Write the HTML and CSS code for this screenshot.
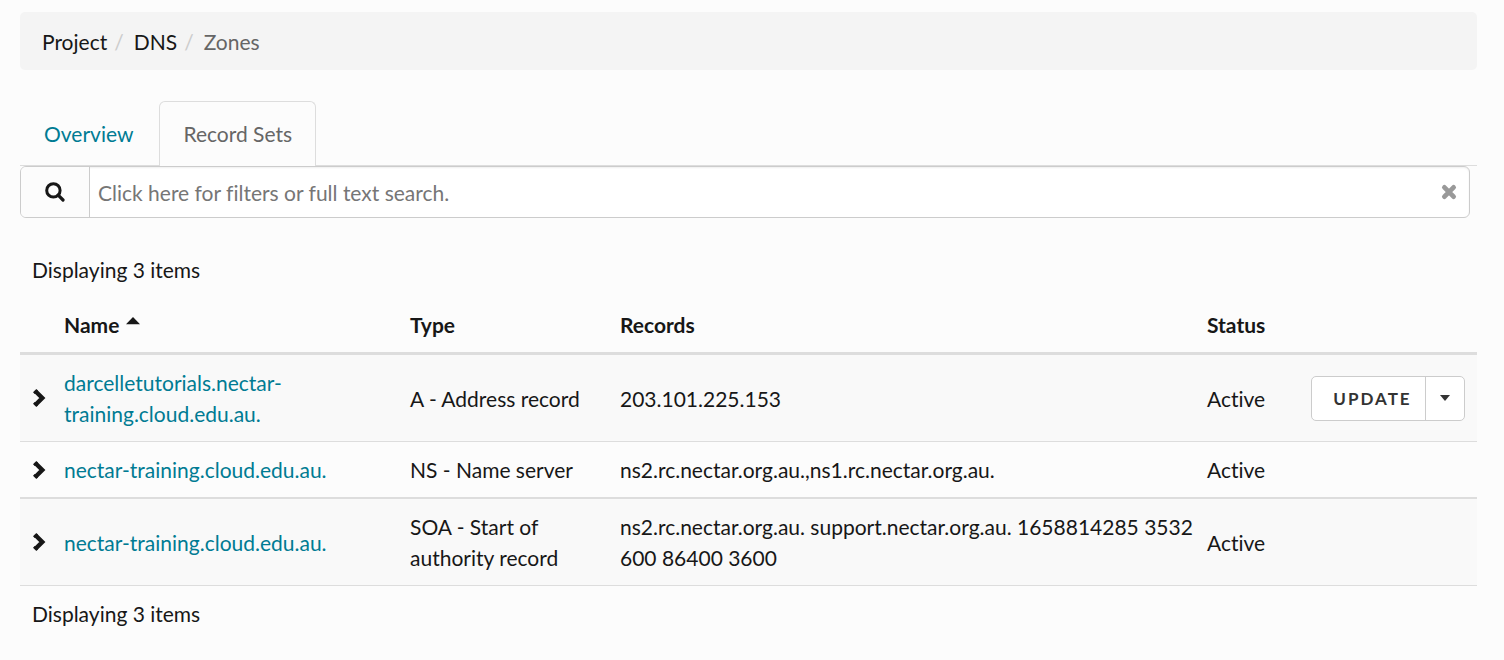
FILE: index.html
```html
<!DOCTYPE html>
<html lang="en">
<head>
<meta charset="utf-8">
<meta name="viewport" content="width=device-width, initial-scale=1">
<title>Zones - Record Sets</title>
<link rel="stylesheet" href="styles.css">
</head>
<body>
<svg class="sprite" aria-hidden="true">
  <symbol id="chevron" viewBox="0 0 14 20"><path d="M3.5 3.2 10.3 10 3.5 16.8" fill="none" stroke="currentColor" stroke-width="4.4" stroke-linecap="butt" stroke-linejoin="miter"/><path d="M1 4.3 4.3 1 6 2.7 2.7 6ZM1 15.7 4.3 19 6 17.3 2.7 14Z" fill="currentColor"/></symbol>
</svg>
<main class="page">
  <nav aria-label="Breadcrumb">
    <ol class="breadcrumb">
      <li><a href="#project">Project</a></li>
      <li><a href="#dns">DNS</a></li>
      <li class="current" aria-current="page">Zones</li>
    </ol>
  </nav>

  <nav class="tabs" aria-label="Zone details">
    <a class="tab" href="#overview">Overview</a>
    <a class="tab active" href="#record-sets" aria-current="page">Record Sets</a>
  </nav>

  <form class="search" role="search">
    <button class="search-button" type="button" aria-label="Search">
      <svg width="20" height="20" viewBox="0 0 20 20" aria-hidden="true"><circle cx="8.4" cy="8.4" r="6.7" fill="none" stroke="currentColor" stroke-width="3"/><path d="M13.2 13.2 18 18" stroke="currentColor" stroke-width="3.2" stroke-linecap="round"/></svg>
    </button>
    <input class="search-input" type="text" aria-label="Filter record sets" placeholder="Click here for filters or full text search.">
    <button class="clear-button" type="button" aria-label="Clear search">
      <svg width="16" height="16" viewBox="0 0 16 16" aria-hidden="true"><path d="M3.4 3.4 12.6 12.6M12.6 3.4 3.4 12.6" stroke="currentColor" stroke-width="4.8" stroke-linecap="round"/></svg>
    </button>
  </form>

  <p class="count">Displaying 3 items</p>
  <table class="records">
    <colgroup>
      <col class="col-toggle"><col class="col-name"><col class="col-type"><col><col class="col-status"><col class="col-actions">
    </colgroup>
    <thead>
      <tr>
        <td></td>
        <th scope="col" aria-sort="ascending">Name <svg class="sort" width="14" height="8" viewBox="0 0 14 8" aria-hidden="true"><path d="M7 0 14 7.2H0Z" fill="currentColor"/></svg></th>
        <th scope="col">Type</th>
        <th scope="col">Records</th>
        <th scope="col">Status</th>
        <td></td>
      </tr>
    </thead>
    <tbody>
      <tr class="striped">
        <td><button class="toggle" type="button" aria-label="Show details"><svg width="14" height="20"><use href="#chevron"/></svg></button></td>
        <td><a href="#record-1">darcelletutorials.nectar-training.cloud.edu.au.</a></td>
        <td>A - Address record</td>
        <td class="data">203.101.225.153</td>
        <td>Active</td>
        <td class="actions">
          <div class="split-button">
            <button class="update" type="button">UPDATE</button>
            <button class="more" type="button" aria-label="More actions"><svg width="12" height="6" viewBox="0 0 12 6" aria-hidden="true"><path d="M1 0H11L6 6Z" fill="currentColor"/></svg></button>
          </div>
        </td>
      </tr>
      <tr>
        <td><button class="toggle" type="button" aria-label="Show details"><svg width="14" height="20"><use href="#chevron"/></svg></button></td>
        <td><a href="#record-2">nectar-training.cloud.edu.au.</a></td>
        <td>NS - Name server</td>
        <td class="data">ns2.rc.nectar.org.au.,ns1.rc.nectar.org.au.</td>
        <td>Active</td>
        <td></td>
      </tr>
      <tr class="striped divided">
        <td><button class="toggle" type="button" aria-label="Show details"><svg width="14" height="20"><use href="#chevron"/></svg></button></td>
        <td><a href="#record-3">nectar-training.cloud.edu.au.</a></td>
        <td>SOA - Start of authority record</td>
        <td class="data">ns2.rc.nectar.org.au. support.nectar.org.au. 1658814285 3532 600 86400 3600</td>
        <td>Active</td>
        <td></td>
      </tr>
    </tbody>
  </table>
  <p class="count">Displaying 3 items</p>
</main>
</body>
</html>
```
FILE: styles.css
```css
* {
  box-sizing: border-box;
}

body {
  margin: 0;
  background: #fcfcfc;
  color: #171717;
  font: 21px/31px Lato, "Open Sans", sans-serif;
  font-variant-ligatures: none;
}

a {
  color: #007b93;
  text-decoration: none;
}

button,
input {
  margin: 0;
  font: inherit;
  color: inherit;
}

button {
  display: flex;
  align-items: center;
  justify-content: center;
  padding: 0;
  border: 0;
  background: none;
  cursor: pointer;
}

svg {
  flex: none;
}

.sprite {
  position: absolute;
  width: 0;
  height: 0;
}

.page {
  padding: 12px 27px 16px 20px;
}

.breadcrumb {
  display: flex;
  margin: 0 0 31px;
  padding: 14px 22px 13px;
  border-radius: 5px;
  background: #f4f4f4;
  list-style: none;
}

.breadcrumb a {
  color: #171717;
}

.breadcrumb li + li::before {
  content: "/";
  padding: 0 10px 0 7px;
  color: #ccc;
}

.breadcrumb .current {
  color: #666;
}

.tabs {
  display: flex;
  gap: 2px;
  border-bottom: 1px solid #ddd;
}

.tab {
  margin-bottom: -1px;
  padding: 16px 23px 17px;
  border: 1px solid transparent;
  border-bottom: 0;
  border-radius: 6px 6px 0 0;
}

.tab.active {
  border-color: #ddd;
  background: #fcfcfc;
  color: #666;
}

.search {
  display: flex;
  height: 52px;
  margin: 0 7px 24px 0;
  border: 1px solid #ccc;
  border-radius: 6px;
  background: #fff;
  box-shadow: inset 0 1px 2px #0001;
}

.search-button {
  width: 69px;
  border-right: 1px solid #ccc;
  border-radius: 5px 0 0 5px;
  background: #fcfcfc;
}

.search-input {
  flex: 1;
  min-width: 0;
  padding: 0 8px;
  border: 0;
  background: none;
}

.search-input::placeholder {
  color: #767676;
  opacity: 1;
}

.clear-button {
  width: 40px;
  color: #999;
}

.count {
  margin: 0;
  padding: 12px;
}

.records {
  width: 100%;
  border-collapse: separate;
  border-spacing: 0;
  table-layout: fixed;
}

.col-toggle {
  width: 32px;
}

.col-name {
  width: 346px;
}

.col-type {
  width: 210px;
}

.col-status {
  width: 104px;
}

.col-actions {
  width: 178px;
}

.records th,
.records td {
  padding: 12px;
  border-bottom: 1px solid #ddd;
  text-align: left;
  vertical-align: middle;
}

.records td:first-child,
.records .data {
  padding-right: 0;
}

.records thead th,
.records thead td {
  border-bottom-width: 3px;
}

.records .striped td {
  background: #f9f9f9;
}

.records .divided td {
  border-top: 1px solid #ddd;
}

.sort {
  margin-left: 2px;
  vertical-align: 8px;
}

.toggle svg {
  display: block;
}

.records .actions {
  padding-top: 0;
  padding-bottom: 0;
}

.split-button {
  display: flex;
  height: 45px;
  border: 1px solid #ccc;
  border-radius: 5px;
  background: #fff;
  color: #333;
}

.update {
  flex: 1;
  padding-left: 8px;
  font-size: 17px;
  font-weight: 700;
  letter-spacing: 2px;
}

.more {
  width: 39px;
  border-left: 1px solid #ccc;
}
```
